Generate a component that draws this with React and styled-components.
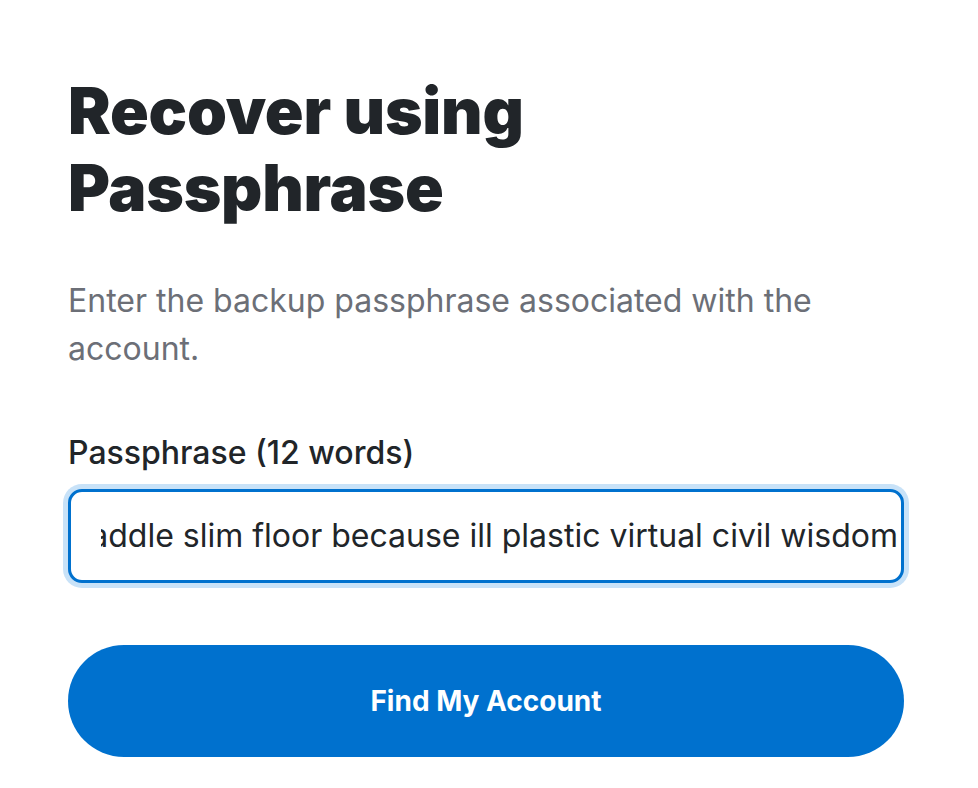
import React from "react";
import styled, { createGlobalStyle } from "styled-components";

const GlobalStyle = createGlobalStyle`
  html, body {
    margin: 0;
    padding: 0;
    background: #ffffff;
  }
  body {
    font-family: Inter, "Noto Sans", "Liberation Sans", sans-serif;
    -webkit-font-smoothing: antialiased;
  }
  * { box-sizing: border-box; }
`;

const Page = styled.main`
  width: 836px;
  margin-left: 68px;
  padding-top: 72px;
  display: flex;
  flex-direction: column;
`;

const Title = styled.h1`
  margin: 0;
  font-size: 64px;
  line-height: 77px;
  font-weight: 900;
  letter-spacing: -0.2px;
  color: #212529;
`;

const Lead = styled.p`
  margin: 51px 0 0;
  font-size: 32px;
  line-height: 48px;
  font-weight: 400;
  color: #6c6f77;
  max-width: 800px;
`;

const Field = styled.div`
  margin-top: 56px;
  display: flex;
  flex-direction: column;
  gap: 12px;
`;

const Label = styled.label`
  font-size: 32px;
  line-height: 48px;
  font-weight: 500;
  color: #212529;
`;

const InputBox = styled.div`
  height: 94px;
  border: 3.5px solid #0071ce;
  border-radius: 14px;
  box-shadow: 0 0 0 5px #c8e2f8;
  background: #fff;
  display: flex;
  align-items: center;
  padding: 0 3px 0 30px;
`;

const InputViewport = styled.div`
  flex: 1;
  overflow: hidden;
  display: flex;
  justify-content: flex-end;
  white-space: nowrap;
`;

const InputText = styled.span`
  font-size: 32px;
  line-height: 44px;
  color: #212529;
`;

const PrimaryButton = styled.button`
  margin-top: 62px;
  height: 112px;
  width: 100%;
  border: none;
  border-radius: 56px;
  background: #0071ce;
  color: #ffffff;
  font-family: Inter, "Noto Sans", "Liberation Sans", sans-serif;
  font-size: 28px;
  font-weight: 700;
  cursor: pointer;
`;

export default function App() {
  return (
    <>
      <GlobalStyle />
      <Page>
        <Title>
          Recover using
          <br />
          Passphrase
        </Title>
        <Lead>Enter the backup passphrase associated with the account.</Lead>
        <Field>
          <Label>Passphrase (12 words)</Label>
          <InputBox>
            <InputViewport>
              <InputText>
                sorry orbit alert paddle slim floor because ill plastic virtual civil wisdom
              </InputText>
            </InputViewport>
          </InputBox>
        </Field>
        <PrimaryButton>Find My Account</PrimaryButton>
      </Page>
    </>
  );
}
